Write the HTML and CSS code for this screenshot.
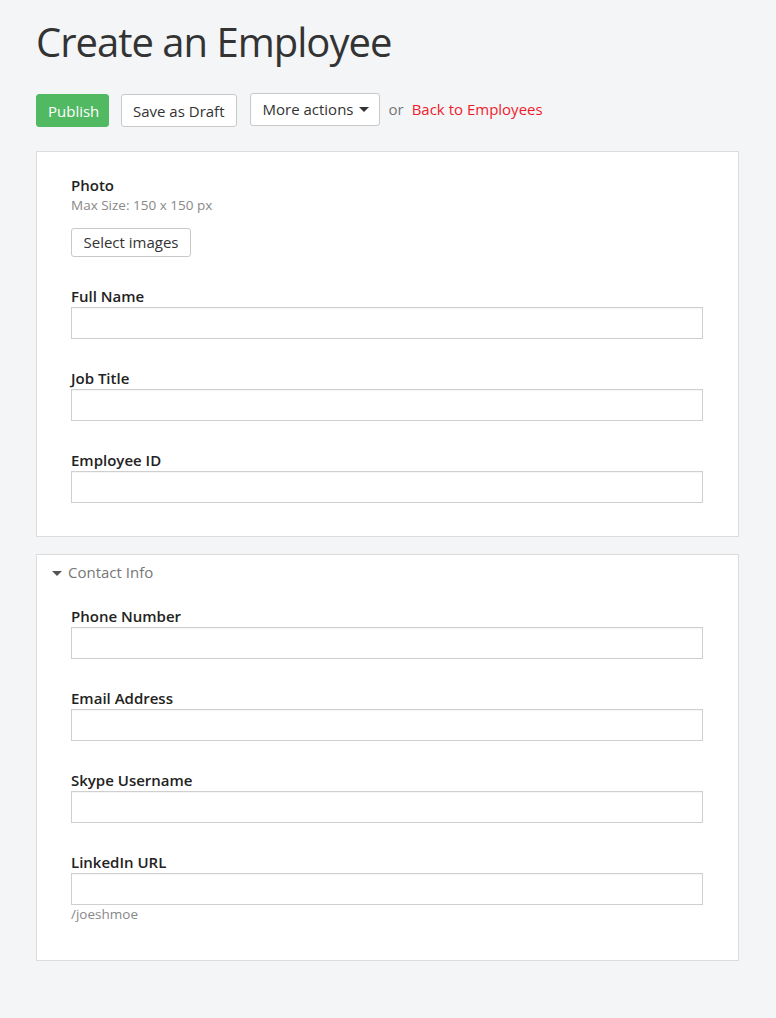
FILE: index.html
```html
<!DOCTYPE html>
<html lang="en">
<head>
<meta charset="utf-8">
<title>Create an Employee</title>
<link rel="stylesheet" href="styles.css">
</head>
<body>
<main class="page">
  <h1 class="title">Create an Employee</h1>
  <div class="actions">
    <button class="btn btn-primary">Publish</button>
    <button class="btn">Save as Draft</button>
    <button class="btn btn-more">More actions <span class="caret"></span></button>
    <span class="or">or</span>
    <a class="back" href="#">Back to Employees</a>
  </div>

  <section class="card card-main">
    <div class="field field-photo">
      <div class="label">Photo</div>
      <div class="hint-top">Max Size: 150 x 150 px</div>
      <button class="btn btn-small">Select images</button>
    </div>
    <div class="field">
      <label class="label">Full Name</label>
      <input class="input" type="text">
    </div>
    <div class="field">
      <label class="label">Job Title</label>
      <input class="input" type="text">
    </div>
    <div class="field">
      <label class="label">Employee ID</label>
      <input class="input" type="text">
    </div>
  </section>

  <section class="card card-contact">
    <div class="section-head"><span class="tri"></span>Contact Info</div>
    <div class="section-body">
      <div class="field">
        <label class="label">Phone Number</label>
        <input class="input" type="text">
      </div>
      <div class="field">
        <label class="label">Email Address</label>
        <input class="input" type="text">
      </div>
      <div class="field">
        <label class="label">Skype Username</label>
        <input class="input" type="text">
      </div>
      <div class="field">
        <label class="label">LinkedIn URL</label>
        <input class="input" type="text">
        <div class="hint">/joeshmoe</div>
      </div>
    </div>
  </section>
</main>
</body>
</html>
```
FILE: styles.css
```css
* { box-sizing: border-box; }
html, body { margin: 0; padding: 0; }
body {
  background: #f4f5f7;
  font-family: "Open Sans", "Liberation Sans", sans-serif;
  color: #333;
}
.page {
  padding: 15px 37px 40px 36px;
}
.title {
  margin: 0;
  font-size: 40px;
  font-weight: 400;
  line-height: 54px;
  color: #333;
  letter-spacing: -1px;
}
.actions {
  display: flex;
  align-items: center;
  margin-top: 24px;
  height: 34px;
}
.btn {
  font-family: inherit;
  font-size: 15px;
  line-height: 20px;
  color: #333;
  background: #fff;
  border: 1px solid #c9c9c9;
  border-radius: 3px;
  padding: 6px 11px 6px 11px;
  height: 33px;
  margin: 0;
  cursor: pointer;
  white-space: nowrap;
}
.btn-primary {
  background: #52b963;
  border-color: #52b963;
  color: #fff;
  width: 73px;
}
.actions .btn + .btn { margin-left: 12px; }
.btn-more {
  display: inline-flex;
  align-items: center;
  padding-left: 12px;
  padding-right: 10px;
  margin-top: -2px;
  margin-left: 13px !important;
}
.caret {
  display: inline-block;
  width: 0; height: 0;
  margin-left: 5px;
  border-left: 5px solid transparent;
  border-right: 5px solid transparent;
  border-top: 5px solid #333;
}
.or {
  margin-left: 9px;
  font-size: 15px;
  color: #777;
  margin-top: -2px;
}
.back {
  margin-left: 8px;
  font-size: 15px;
  color: #ee1c2b;
  text-decoration: none;
  margin-top: -2px;
}
.card {
  background: #fff;
  border: 1px solid #dcdcdc;
  width: 703px;
}
.card-main {
  margin-top: 24px;
  padding: 23px 35px 4px 34px;
}
.card-contact {
  margin-top: 17px;
  padding: 7px 35px 7px 15px;
}
.section-head {
  display: flex;
  align-items: center;
  font-size: 15px;
  line-height: 20px;
  color: #777;
}
.tri {
  display: inline-block;
  width: 0; height: 0;
  border-left: 5.5px solid transparent;
  border-right: 5.5px solid transparent;
  border-top: 5px solid #555;
  margin-right: 6px;
  margin-left: 0;
  margin-top: 2px;
}
.section-body {
  padding-left: 19px;
  margin-top: 24px;
}
.field {
  display: flex;
  flex-direction: column;
  align-items: flex-start;
  margin-bottom: 29px;
}
.label {
  font-size: 15px;
  font-weight: 600;
  line-height: 20px;
  color: #222;
  margin-bottom: 1px;
}
.hint-top {
  font-size: 13.5px;
  line-height: 18px;
  color: #888;
}
.btn-small {
  margin-top: 14px;
  height: 29px;
  padding: 4px 11px;
  font-size: 15px;
  line-height: 19px;
  width: 120px;
}
.field-photo { margin-bottom: 29px; }
.input {
  display: block;
  width: 100%;
  height: 32px;
  border: 1px solid #cfcfcf;
  border-radius: 0;
  background: #fff;
  box-shadow: inset 0 1px 1px rgba(0,0,0,0.04);
  font-family: inherit;
  font-size: 14px;
  padding: 4px 8px;
  margin: 0;
}
.hint {
  margin-top: 0;
  font-size: 13.5px;
  line-height: 18px;
  color: #888;
}
.card-contact .field:last-child { margin-bottom: 30px; }
```
